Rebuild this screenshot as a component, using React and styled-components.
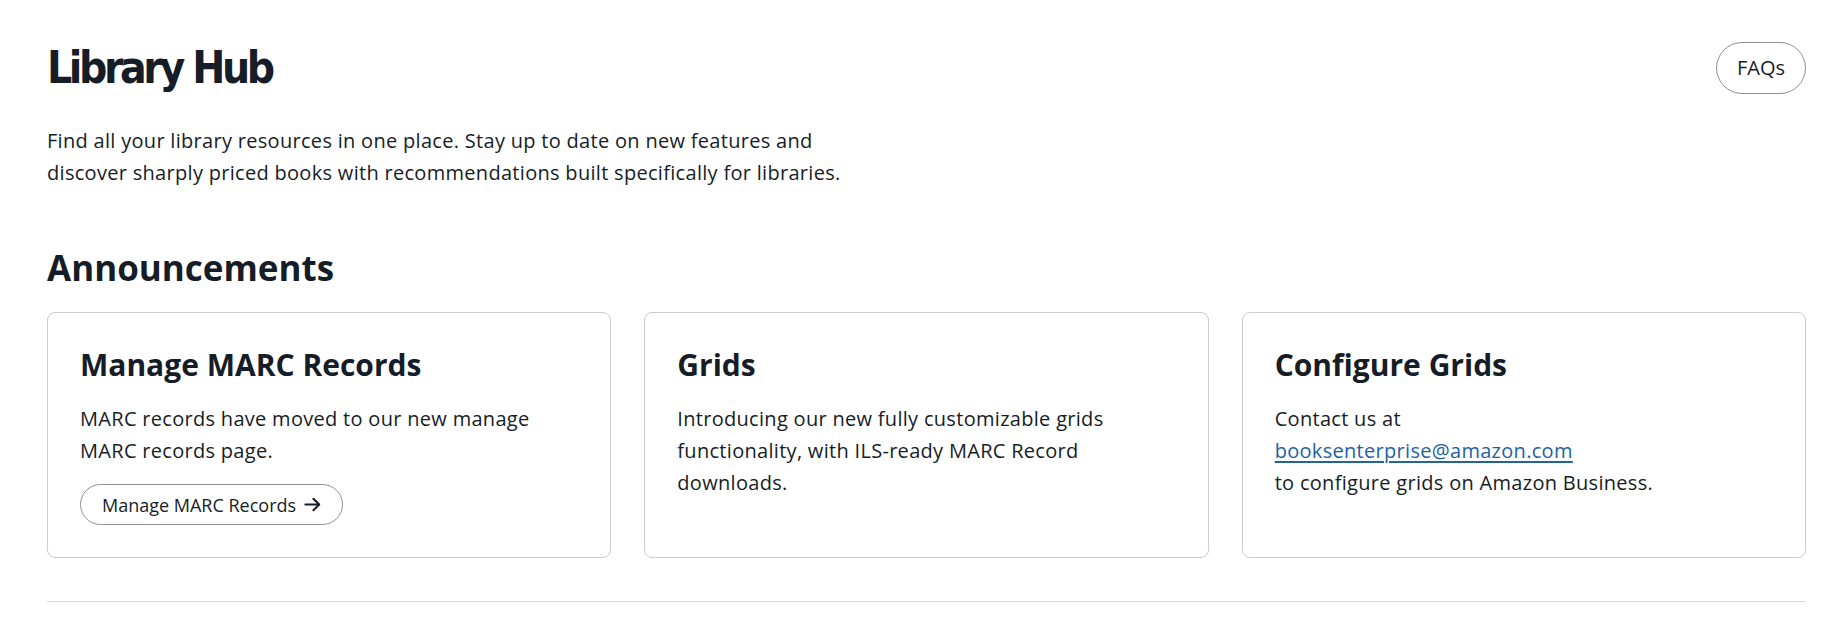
import React from 'react';
import styled, { createGlobalStyle } from 'styled-components';

const GlobalStyle = createGlobalStyle`
  html, body {
    margin: 0;
    padding: 0;
    background: #ffffff;
  }
  body {
    font-family: "Open Sans", "Noto Sans", "Liberation Sans", sans-serif;
    color: #161d26;
    -webkit-font-smoothing: antialiased;
  }
`;

const Page = styled.div`
  padding: 40px 38px 40px 47px;
`;

const HeaderRow = styled.header`
  display: flex;
  justify-content: space-between;
  align-items: center;
`;

const Title = styled.h1`
  margin: 0;
  font-family: "DejaVu Sans Condensed", "DejaVu Sans", sans-serif;
  font-size: 44px;
  line-height: 55px;
  font-weight: 700;
  letter-spacing: -3.4px;
  color: #161d26;
`;

const PillButton = styled.button`
  display: inline-flex;
  align-items: center;
  justify-content: center;
  gap: 8px;
  height: ${props => (props.size === 'large' ? '52px' : '41px')};
  padding: 0 ${props => (props.size === 'large' ? '20px' : '21px')};
  border: 1px solid #8d9096;
  border-radius: 999px;
  background: #ffffff;
  color: #161d26;
  font-family: inherit;
  font-size: ${props => (props.size === 'large' ? '20px' : '18px')};
  cursor: pointer;

  &:hover {
    background: #f7f8f8;
  }
`;

const Intro = styled.p`
  margin: 30px 0 0;
  max-width: 830px;
  font-size: 20px;
  line-height: 32px;
  letter-spacing: 0.3px;
`;

const SectionTitle = styled.h2`
  margin: 56px 0 0;
  font-size: 35px;
  line-height: 45px;
  font-weight: 700;
`;

const CardGrid = styled.div`
  display: grid;
  grid-template-columns: repeat(3, 1fr);
  gap: 33px;
  margin-top: 22px;
`;

const Card = styled.section`
  border: 1px solid #c9ccd1;
  border-radius: 8px;
  padding: 32px;
`;

const CardTitle = styled.h3`
  margin: 0;
  font-size: 30px;
  line-height: 40px;
  font-weight: 700;
`;

const CardText = styled.p`
  margin: 18px 0 0;
  font-size: 20px;
  line-height: 32px;
  letter-spacing: 0.3px;
`;

const CardAction = styled.div`
  margin-top: 17px;
`;

const MailLink = styled.a`
  color: #2162a1;
  text-decoration: underline;
  text-underline-offset: 3px;
`;

const Divider = styled.hr`
  margin: 43px 0 0;
  border: none;
  border-top: 1px solid #d5d9d9;
`;

const ArrowIcon = () => (
  <svg width="17" height="17" viewBox="0 0 18 18" fill="none" stroke="currentColor" strokeWidth="2.2" strokeLinecap="round" strokeLinejoin="round">
    <path d="M1.5 9h14.5" />
    <path d="M10 3l6 6-6 6" />
  </svg>
);

const App = () => {
  return (
    <>
      <GlobalStyle />
      <Page>
        <HeaderRow>
          <Title>Library Hub</Title>
          <PillButton size="large">FAQs</PillButton>
        </HeaderRow>

        <Intro>
          Find all your library resources in one place. Stay up to date on new features and
          discover sharply priced books with recommendations built specifically for libraries.
        </Intro>

        <SectionTitle>Announcements</SectionTitle>

        <CardGrid>
          <Card>
            <CardTitle>Manage MARC Records</CardTitle>
            <CardText>MARC records have moved to our new manage MARC records page.</CardText>
            <CardAction>
              <PillButton>
                Manage MARC Records <ArrowIcon />
              </PillButton>
            </CardAction>
          </Card>

          <Card>
            <CardTitle>Grids</CardTitle>
            <CardText>
              Introducing our new fully customizable grids functionality, with ILS-ready MARC Record downloads.
            </CardText>
          </Card>

          <Card>
            <CardTitle>Configure Grids</CardTitle>
            <CardText>
              Contact us at
              <br />
              <MailLink href="mailto:booksenterprise@amazon.com">booksenterprise@amazon.com</MailLink>
              <br />
              to configure grids on Amazon Business.
            </CardText>
          </Card>
        </CardGrid>

        <Divider />
      </Page>
    </>
  );
};

export default App;
